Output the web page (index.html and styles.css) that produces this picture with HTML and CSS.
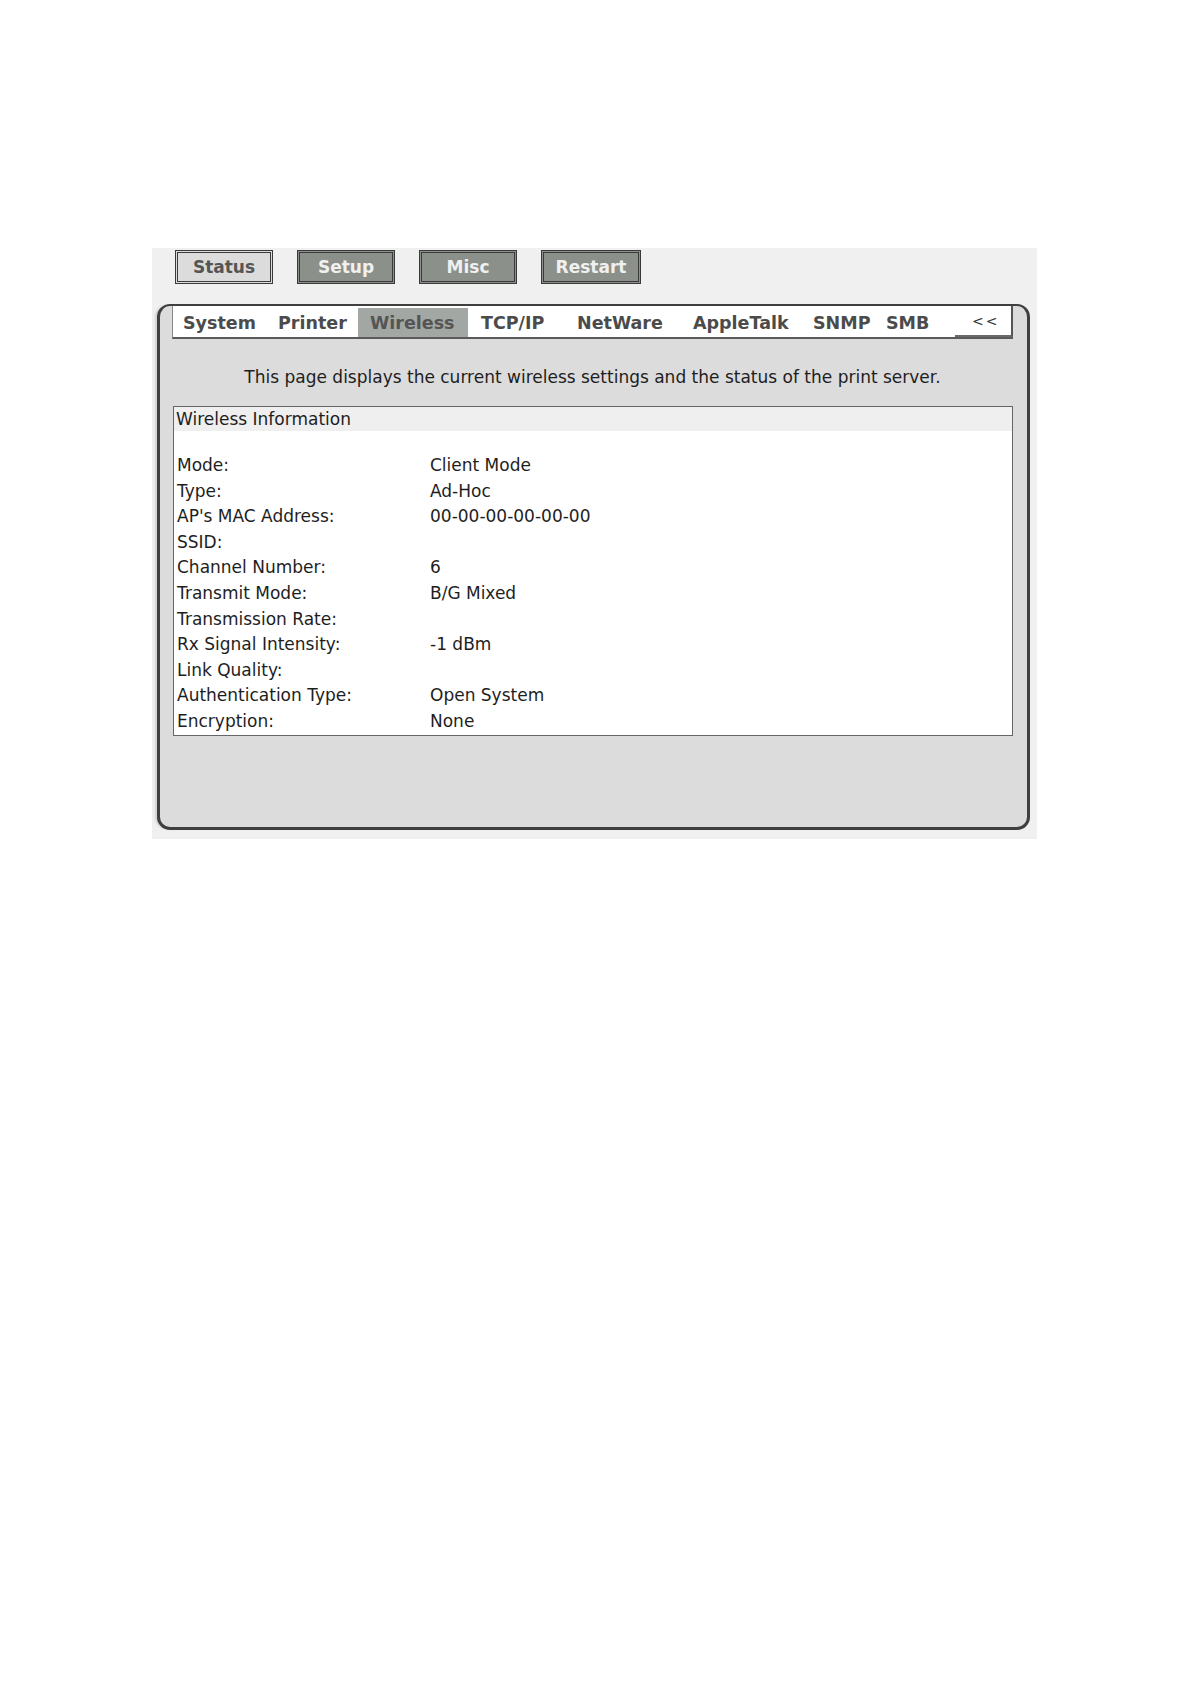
FILE: index.html
```html
<!DOCTYPE html>
<html>
<head>
<meta charset="utf-8">
<title>Wireless Information</title>
<link rel="stylesheet" href="styles.css">
</head>
<body>
<div class="frame">
  <div class="topnav">
    <span class="btn btn-current">Status</span>
    <span class="btn">Setup</span>
    <span class="btn">Misc</span>
    <span class="btn btn-wide">Restart</span>
  </div>
  <div class="panel">
    <div class="tabs">
      <span class="tab tab-system">System</span>
      <span class="tab tab-printer">Printer</span>
      <span class="tab tab-active">Wireless</span>
      <span class="tab tab-tcpip">TCP/IP</span>
      <span class="tab tab-netware">NetWare</span>
      <span class="tab tab-appletalk">AppleTalk</span>
      <span class="tab tab-snmp">SNMP</span>
      <span class="tab tab-smb">SMB</span>
      <span class="tab tab-collapse">&lt;&lt;</span>
    </div>
    <p class="desc">This page displays the current wireless settings and the status of the print server.</p>
    <div class="info">
      <div class="info-head">Wireless Information</div>
      <div class="info-body">
        <span class="label">Mode:</span><span class="value">Client Mode</span>
        <span class="label">Type:</span><span class="value">Ad-Hoc</span>
        <span class="label">AP's MAC Address:</span><span class="value">00-00-00-00-00-00</span>
        <span class="label">SSID:</span><span class="value"></span>
        <span class="label">Channel Number:</span><span class="value">6</span>
        <span class="label">Transmit Mode:</span><span class="value">B/G Mixed</span>
        <span class="label">Transmission Rate:</span><span class="value"></span>
        <span class="label">Rx Signal Intensity:</span><span class="value">-1 dBm</span>
        <span class="label">Link Quality:</span><span class="value"></span>
        <span class="label">Authentication Type:</span><span class="value">Open System</span>
        <span class="label">Encryption:</span><span class="value">None</span>
      </div>
    </div>
  </div>
</div>
</body>
</html>
```
FILE: styles.css
```css
body {
  margin: 0;
  background: #ffffff;
  font-family: "DejaVu Sans", Verdana, sans-serif;
}

.frame {
  margin: 248px 0 0 152px;
  width: 885px;
  height: 591px;
  box-sizing: border-box;
  padding-top: 2px;
  background: #f0f0f0;
}

.topnav {
  display: flex;
  gap: 24px;
  padding-left: 23px;
  height: 34px;
}

.btn {
  box-sizing: border-box;
  width: 98px;
  height: 34px;
  border: 3px double #3a3a3a;
  background: #8b908b;
  color: #f0f0f0;
  font-weight: bold;
  font-size: 17px;
  display: flex;
  align-items: center;
  justify-content: center;
}

.btn-current {
  background: #dcdcdc;
  color: #555555;
}

.btn-wide {
  width: 100px;
}

.panel {
  margin: 20px 0 0 5px;
  width: 873px;
  height: 526px;
  box-sizing: border-box;
  border: 3px solid #3f3f3f;
  border-top-width: 2px;
  border-radius: 13px;
  background: #dcdcdc;
  padding: 0 14px 0 12px;
  box-shadow: -3px 0 2px -1px #d2d2d2;
}

.tabs {
  display: grid;
  grid-template-columns: 94px 91px 110px 97px 113px 123px 72px 82px 58px;
  height: 33px;
  box-sizing: border-box;
  padding-top: 2px;
  background: #ffffff;
  border-left: 1px solid #8a8a8a;
  border-bottom: 2px solid #5a5a5a;
}

.tab {
  display: flex;
  align-items: center;
  font-weight: bold;
  font-size: 17.5px;
  color: #4b4b4b;
  white-space: nowrap;
}

.tab-system { padding-left: 10px; }
.tab-printer { padding-left: 11px; }
.tab-tcpip { padding-left: 13px; }
.tab-netware { padding-left: 12px; }
.tab-appletalk { padding-left: 15px; }
.tab-snmp { padding-left: 12px; }
.tab-smb { padding-left: 13px; }

.tab-active {
  padding-left: 12px;
  background: #a3a7a3;
  color: #555555;
}

.tab-collapse {
  padding-left: 17px;
  font-weight: normal;
  font-size: 14px;
  letter-spacing: 2px;
  color: #333333;
  margin-top: -2px;
  border-right: 2px solid #555555;
  border-bottom: 2px solid #6a6a6a;
  background: #ffffff;
}

.desc {
  margin: 28px 0 0;
  text-align: center;
  font-size: 17px;
  line-height: 20px;
  color: #1e1e1e;
}

.info {
  margin: 19px 0 0 1px;
  border: 1px solid #666666;
  background: #ffffff;
}

.info-head {
  height: 24px;
  line-height: 24px;
  padding-left: 2px;
  background: #efefef;
  font-size: 17px;
  color: #1e1e1e;
}

.info-body {
  padding: 22px 0 0 3px;
  display: grid;
  grid-template-columns: 253px 1fr;
  grid-auto-rows: 25.6px;
  align-items: center;
  font-size: 17px;
  line-height: 25.6px;
  color: #1e1e1e;
}
```
